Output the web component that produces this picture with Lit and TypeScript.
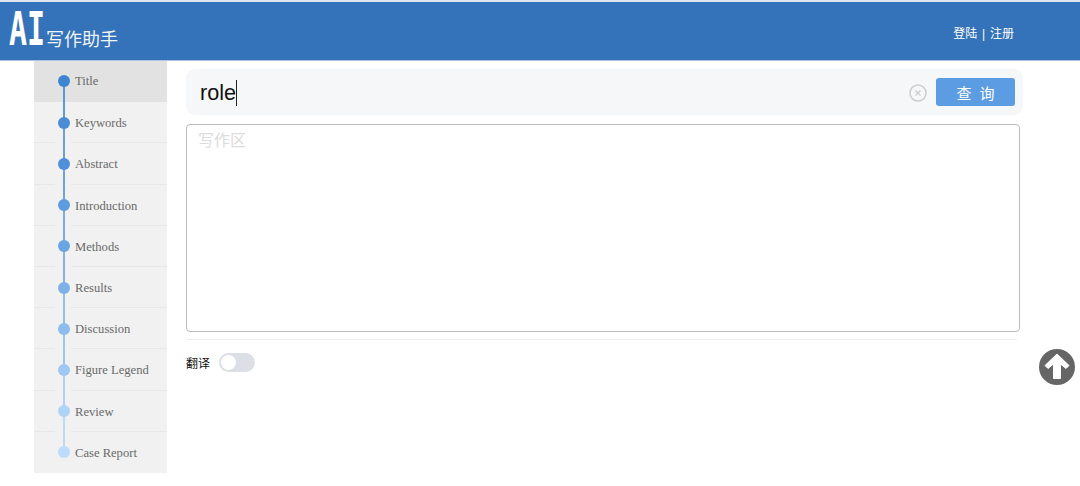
import { LitElement, html, css } from "lit";
import { customElement } from "lit/decorators.js";

const ITEMS: [string, string][] = [
  ["Title", "#3d85d1"],
  ["Keywords", "#4a8cd6"],
  ["Abstract", "#4f90d9"],
  ["Introduction", "#5f9bdf"],
  ["Methods", "#6ba4e3"],
  ["Results", "#7fb1e9"],
  ["Discussion", "#8dbcee"],
  ["Figure Legend", "#a0c8f4"],
  ["Review", "#b0d3f8"],
  ["Case Report", "#bcdcfc"],
];

@customElement("app-root")
export class AppRoot extends LitElement {
  static styles = css`
    :host { display: block; height: 486px; overflow: hidden; position: relative; background: #fff; font-family: "Liberation Sans", "Noto Sans CJK SC", sans-serif; }
    .strip { height: 2px; background: #dfe6ee; }
    header { height: 59px; background: #3473b9; display: flex; justify-content: space-between; border-bottom: 1px solid #a9c3e0; box-sizing: border-box; }
    .brand { display: flex; align-items: flex-end; padding: 0 0 11px 9px; color: #fff; }
    .ai { font: 700 30px/22px "DejaVu Sans Mono", monospace; color: #fff; transform: scaleY(1.55); transform-origin: left bottom; letter-spacing: 0; width: 37px; margin-bottom: 2px; white-space: nowrap; }
    .name { font: 18px/22px "Noto Sans CJK SC", sans-serif; opacity: .92; }
    .auth { color: #fff; font-size: 12px; line-height: 16px; padding: 24px 66px 0 0; word-spacing: 1.5px; }
    .main { display: flex; }
    nav { width: 133px; margin-left: 34px; background: #f1f1f1; display: flex; flex-direction: column; height: 412px; }
    .row { flex: none; height: 41.2px; display: flex; align-items: center; position: relative; font: 12.6px "Liberation Serif", serif; color: #6a6a6a; padding: 2px 0 0 41px; box-sizing: border-box; }
    .row.on { background: #e2e2e2; padding-top: 0; }
    .row + .row + .row::before, .row + .row + .row::after { content: ""; position: absolute; top: -1px; height: 1px; background: #e8e8e8; }
    .row + .row + .row::before { left: 0; width: 21px; }
    .row + .row + .row::after { left: 37px; right: 0; }
    .dot { position: absolute; left: 24px; top: 50%; width: 12px; height: 12px; margin-top: -6px; border-radius: 50%; z-index: 1; }
    .on .dot { margin-top: -7px; }
    .line { position: absolute; left: 29px; top: 50%; width: 2px; height: 100%; margin-top: -1px; opacity: .8; }
    .content { width: 837px; margin-left: 19px; padding-top: 8px; display: flex; flex-direction: column; }
    .search { height: 46px; background: #f6f7f9; border-radius: 9px; display: flex; align-items: center; padding: 0 8px 0 14px; box-sizing: border-box; }
    .q { font-size: 21.6px; color: #111; border-right: 1px solid #222; line-height: 26px; flex: none; margin-top: 1px; }
    .x { margin-left: auto; width: 20px; height: 20px; flex: none; margin-top: 1px; }
    .btn { width: 79px; height: 28px; margin-left: 8px; background: #5c9ce2; border-radius: 3px; color: #fff; font-size: 15px; letter-spacing: 8px; padding-left: 8px; box-sizing: border-box; display: flex; align-items: center; justify-content: center; }
    .area { width: 834px; height: 208px; margin-top: 9px; box-sizing: border-box; border: 1px solid #bbb; border-radius: 4px; padding: 6px 11px; color: #dcdcdc; font-size: 16px; line-height: 20px; }
    .rule { width: 831px; height: 1px; background: #eee; margin-top: 7px; }
    .trans { display: flex; align-items: center; gap: 9px; margin-top: 13px; font-size: 12px; color: #111; }
    .sw { width: 36px; height: 19px; background: #dcdfe6; border-radius: 10px; padding: 2px; box-sizing: border-box; }
    .knob { width: 15px; height: 15px; background: #fff; border-radius: 50%; }
    .up { position: absolute; left: 1039px; top: 349px; width: 36px; height: 36px; }
  `;

  render() {
    return html`
      <div class="strip"></div>
      <header>
        <div class="brand"><span class="ai">AI</span><span class="name">写作助手</span></div>
        <div class="auth">登陆 | 注册</div>
      </header>
      <div class="main">
        <nav>
          ${ITEMS.map(([t, c], i) => html`
            <div class="row ${i === 0 ? "on" : ""}">
              ${i < ITEMS.length - 1 ? html`<span class="line" style="background:${c}"></span>` : ""}
              <span class="dot" style="background:${c}"></span>${t}
            </div>`)}
        </nav>
        <div class="content">
          <div class="search">
            <span class="q">role</span>
            <svg class="x" viewBox="0 0 20 20" fill="none" stroke="#ccc"><circle cx="10" cy="10" r="8" stroke-width="1.5"/><path d="M7.5 7.5l5 5m0-5l-5 5" stroke-width="1.2"/></svg>
            <div class="btn">查询</div>
          </div>
          <div class="area">写作区</div>
          <div class="rule"></div>
          <div class="trans">翻译<div class="sw"><div class="knob"></div></div></div>
        </div>
      </div>
      <svg class="up" viewBox="0 0 36 36"><circle cx="18" cy="18" r="18" fill="#666"/><path d="M18 5 L30 16.5 L27 19.5 L21.5 15 V29.5 H14.5 V15 L9 19.5 L6 16.5 Z" fill="#fff" stroke="#fff" stroke-width="1" stroke-linejoin="round"/></svg>
    `;
  }
}
